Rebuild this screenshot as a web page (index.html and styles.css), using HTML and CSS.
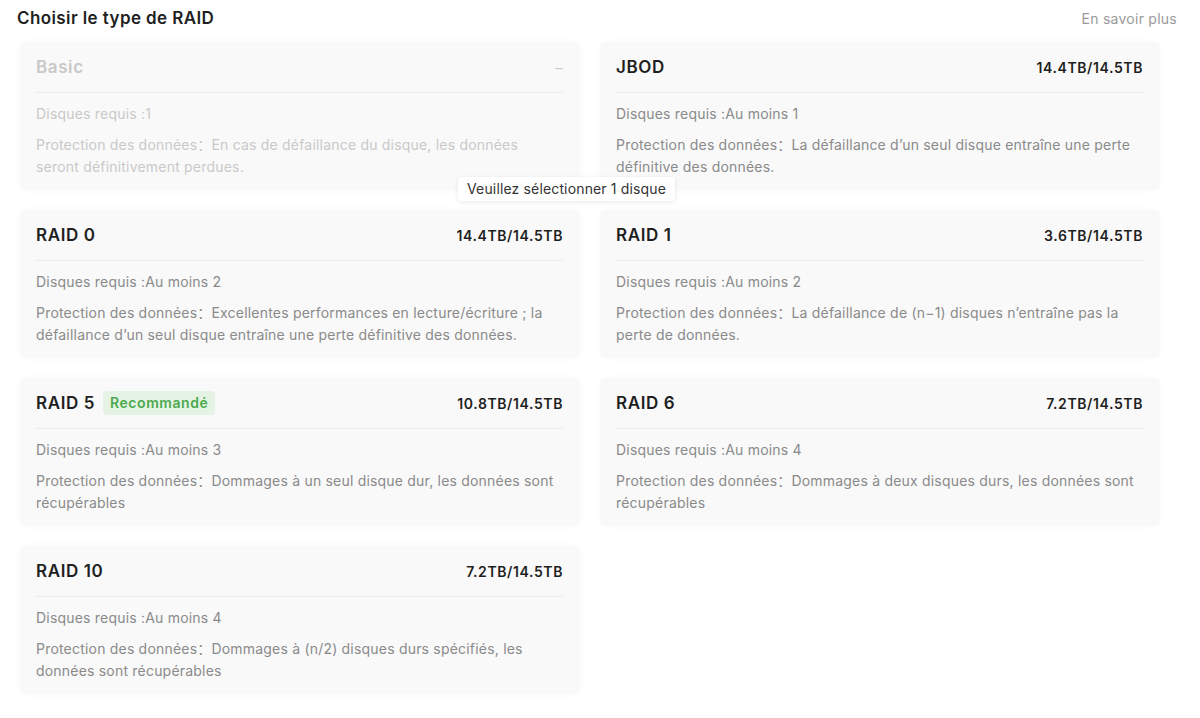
FILE: index.html
```html
<!DOCTYPE html>
<html lang="fr">
<head>
<meta charset="utf-8">
<title>Choisir le type de RAID</title>
<link rel="stylesheet" href="styles.css">
</head>
<body>
<div class="page">
  <header class="header">
    <h1 class="title">Choisir le type de RAID</h1>
    <a class="more">En savoir plus</a>
  </header>
  <div class="grid">
    <section class="card disabled">
      <div class="card-head"><span class="name">Basic</span><span class="cap dash">–</span></div>
      <div class="card-body">
        <p class="line">Disques requis :1</p>
        <p class="line desc">Protection des données：En cas de défaillance du disque, les données seront définitivement perdues.</p>
      </div>
    </section>
    <section class="card">
      <div class="card-head"><span class="name">JBOD</span><span class="cap">14.4TB/14.5TB</span></div>
      <div class="card-body">
        <p class="line">Disques requis :Au moins 1</p>
        <p class="line desc">Protection des données：La défaillance d’un seul disque entraîne une perte définitive des données.</p>
      </div>
    </section>
    <section class="card">
      <div class="card-head"><span class="name">RAID 0</span><span class="cap">14.4TB/14.5TB</span></div>
      <div class="card-body">
        <p class="line">Disques requis :Au moins 2</p>
        <p class="line desc">Protection des données：Excellentes performances en lecture/écriture ; la défaillance d’un seul disque entraîne une perte définitive des données.</p>
      </div>
    </section>
    <section class="card">
      <div class="card-head"><span class="name">RAID 1</span><span class="cap">3.6TB/14.5TB</span></div>
      <div class="card-body">
        <p class="line">Disques requis :Au moins 2</p>
        <p class="line desc">Protection des données：La défaillance de (n−1) disques n’entraîne pas la perte de données.</p>
      </div>
    </section>
    <section class="card">
      <div class="card-head"><span class="name">RAID 5<span class="badge">Recommandé</span></span><span class="cap">10.8TB/14.5TB</span></div>
      <div class="card-body">
        <p class="line">Disques requis :Au moins 3</p>
        <p class="line desc">Protection des données：Dommages à un seul disque dur, les données sont récupérables</p>
      </div>
    </section>
    <section class="card">
      <div class="card-head"><span class="name">RAID 6</span><span class="cap">7.2TB/14.5TB</span></div>
      <div class="card-body">
        <p class="line">Disques requis :Au moins 4</p>
        <p class="line desc">Protection des données：Dommages à deux disques durs, les données sont récupérables</p>
      </div>
    </section>
    <section class="card">
      <div class="card-head"><span class="name">RAID 10</span><span class="cap">7.2TB/14.5TB</span></div>
      <div class="card-body">
        <p class="line">Disques requis :Au moins 4</p>
        <p class="line desc">Protection des données：Dommages à (n/2) disques durs spécifiés, les données sont récupérables</p>
      </div>
    </section>
  </div>
  <div class="tooltip">Veuillez sélectionner 1 disque</div>
</div>
</body>
</html>
```
FILE: styles.css
```css
html, body {
  margin: 0;
  padding: 0;
  background: #ffffff;
}
body {
  font-family: Inter, "Noto Sans", "Noto Sans CJK SC", sans-serif;
  color: #222;
}
.page {
  position: relative;
  width: 1200px;
  height: 718px;
}
.header {
  display: flex;
  justify-content: space-between;
  align-items: center;
  height: 36px;
  padding: 0 23px 0 17px;
}
.title {
  margin: 0;
  font-size: 17px;
  font-weight: 600;
  color: #1f1f1f;
  letter-spacing: 0.4px;
}
.more {
  font-size: 14px;
  color: #9a9a9a;
  letter-spacing: 0.25px;
  cursor: pointer;
}
.grid {
  display: grid;
  grid-template-columns: 560px 560px;
  column-gap: 20px;
  row-gap: 20px;
  padding: 6px 0 0 20px;
}
.card {
  box-sizing: border-box;
  height: 148px;
  background: #f9f9f9;
  border-radius: 6px;
  box-shadow: 0 0 6px rgba(0, 0, 0, 0.035);
  padding: 0 17px 0 16px;
}
.card-head {
  display: flex;
  justify-content: space-between;
  align-items: center;
  height: 50px;
  border-bottom: 1px solid #ebebeb;
}
.name {
  display: flex;
  align-items: center;
  font-size: 17px;
  font-weight: 600;
  letter-spacing: 0.6px;
  color: #1f1f1f;
}
.cap {
  font-size: 14px;
  font-weight: 600;
  letter-spacing: 0.6px;
  color: #1f1f1f;
}
.badge {
  margin-left: 8px;
  padding: 0 7px;
  height: 24px;
  line-height: 24px;
  border-radius: 4px;
  background: #e5f3e4;
  color: #4caa4f;
  font-size: 14px;
  font-weight: 600;
  letter-spacing: 0.55px;
}
.card-body {
  padding-top: 10px;
}
.line {
  margin: 0;
  font-size: 14px;
  line-height: 22px;
  letter-spacing: 0.2px;
  color: #8a8a8a;
}
.desc {
  margin-top: 9px;
}
.disabled .name,
.disabled .cap,
.disabled .line {
  color: #c9c9c9;
}
.disabled .dash {
  font-weight: 400;
}
.tooltip {
  position: absolute;
  left: 458px;
  top: 177px;
  height: 24px;
  line-height: 24px;
  padding: 0 9px;
  background: #ffffff;
  border-radius: 3px;
  box-shadow: 0 1px 5px rgba(0, 0, 0, 0.09);
  font-size: 14px;
  letter-spacing: 0.15px;
  color: #333;
}
```
